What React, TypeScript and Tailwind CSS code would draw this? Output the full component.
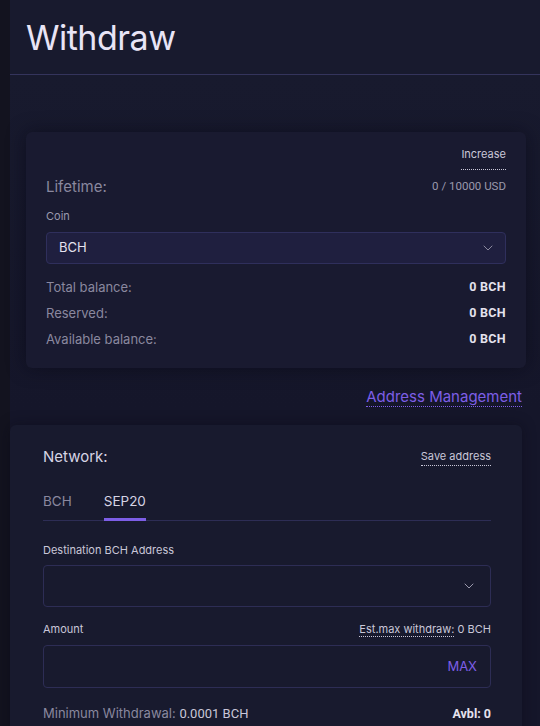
import { ChevronDown } from "lucide-react"

const sans = "font-['Inter','Noto_Sans',sans-serif]"
const num = "font-['Roboto','Liberation_Sans',sans-serif]"

function BalanceRow({ label, value }: { label: string; value: string }) {
  return (
    <div className="flex h-[26px] items-center justify-between">
      <span className="text-[13px] text-[#8a889f]">{label}</span>
      <span className={`${num} text-[12.5px] font-bold tracking-wide text-[#e4e2ee]`}>{value}</span>
    </div>
  )
}

export default function App() {
  return (
    <div className={`flex min-h-[726px] w-[540px] overflow-hidden bg-[#13131f] ${sans}`}>
      {/* left rail */}
      <div className="w-[10px] shrink-0 bg-[#13131f]" />

      <div className="flex flex-1 flex-col bg-[#181a2e]">
        {/* Header */}
        <div className="flex h-[75px] items-center border-b border-[#34345c] px-4">
          <h1 className="text-[34px] font-normal tracking-[-0.5px] text-[#e8e4f6]">Withdraw</h1>
        </div>

        <div className="bg-gradient-to-b from-[#181a2e] via-[#15162a] to-[#15162a] pt-[57px]">
          {/* Limits card */}
          <div className="ml-4 mr-[14px] rounded-md bg-[#191a30] px-5 pb-[15px] pt-[14px] shadow-[0_0_18px_rgba(8,8,20,0.55)]">
            <div className="flex justify-end">
              <span className="border-b border-dotted border-[#c9c7d8] pb-[6px] text-[11px] text-[#c9c7d8]">Increase</span>
            </div>
            <div className="mt-[6px] flex items-center justify-between">
              <span className="text-[15px] text-[#8a889f]">Lifetime:</span>
              <span className={`${num} text-[11.5px] text-[#9b99ad]`}>0 / 10000 USD</span>
            </div>
            <div className="mt-[10px] text-[11px] text-[#9b99ad]">Coin</div>
            <div className="mt-[7px] flex h-8 items-center justify-between rounded border border-[#2f2f5c] bg-[#1f1f3f] pl-3 pr-[9px]">
              <span className="text-[13px] text-[#e4e2ee]">BCH</span>
              <ChevronDown className="h-4 w-4 text-[#9b99ad]" strokeWidth={1.3} />
            </div>
            <div className="mt-[11px]">
              <BalanceRow label="Total balance:" value="0 BCH" />
              <BalanceRow label="Reserved:" value="0 BCH" />
              <BalanceRow label="Available balance:" value="0 BCH" />
            </div>
          </div>

          {/* Address management link */}
          <div className="mr-[18px] flex h-[57px] items-center justify-end pt-[2px]">
            <span className="border-b border-dotted border-[#7d5ee6] leading-[18px] text-[15px] text-[#7d5ee6]">
              Address Management
            </span>
          </div>

          {/* Withdraw form card */}
          <div className="mr-[18px] rounded-t-md bg-[#181a2e] pb-4 pl-[33px] pr-[31px] pt-[21px] shadow-[0_0_14px_rgba(8,8,20,0.45)]">
            <div className="flex items-center justify-between">
              <span className="text-[15px] text-[#d6d4e4]">Network:</span>
              <span className="border-b border-dotted border-[#c9c7d8] pb-[1px] text-[11px] text-[#c9c7d8]">Save address</span>
            </div>

            {/* Tabs */}
            <div className="mt-[23px] flex gap-[32px] border-b border-[#2d2d55] text-[13.5px]">
              <span className="pb-[9px] text-[#8a889f]">BCH</span>
              <span className="-mb-[1px] border-b-[3px] border-[#7d5ee6] pb-[6px] text-[#d6d4e4]">SEP20</span>
            </div>

            <div className="mt-[21px] text-[11px] text-[#c9c7d8]">Destination BCH Address</div>
            <div className="mt-[6px] flex h-[42px] items-center justify-end rounded-sm border border-[#2d2d55] pr-[13px]">
              <ChevronDown className="h-4 w-4 text-[#9b99ad]" strokeWidth={1.5} />
            </div>

            <div className="mt-[14px] flex items-center justify-between text-[11px] text-[#c9c7d8]">
              <span>Amount</span>
              <span>
                <span className="border-b border-dotted border-[#c9c7d8]">Est.max withdraw:</span> 0 BCH
              </span>
            </div>
            <div className="mt-[8px] flex h-[43px] items-center justify-end rounded-sm border border-[#2d2d55] pr-[13px]">
              <span className="text-[13px] text-[#7d5ee6]">MAX</span>
            </div>

            <div className="mt-[16px] flex items-center justify-between">
              <span className="text-[13px] text-[#8a889f]">
                Minimum Withdrawal: <span className={`${num} text-[#c9c7d8]`}>0.0001 BCH</span>
              </span>
              <span className={`${num} text-[12.5px] font-bold text-[#e4e2ee]`}>Avbl: 0</span>
            </div>
          </div>
        </div>
      </div>
    </div>
  )
}
